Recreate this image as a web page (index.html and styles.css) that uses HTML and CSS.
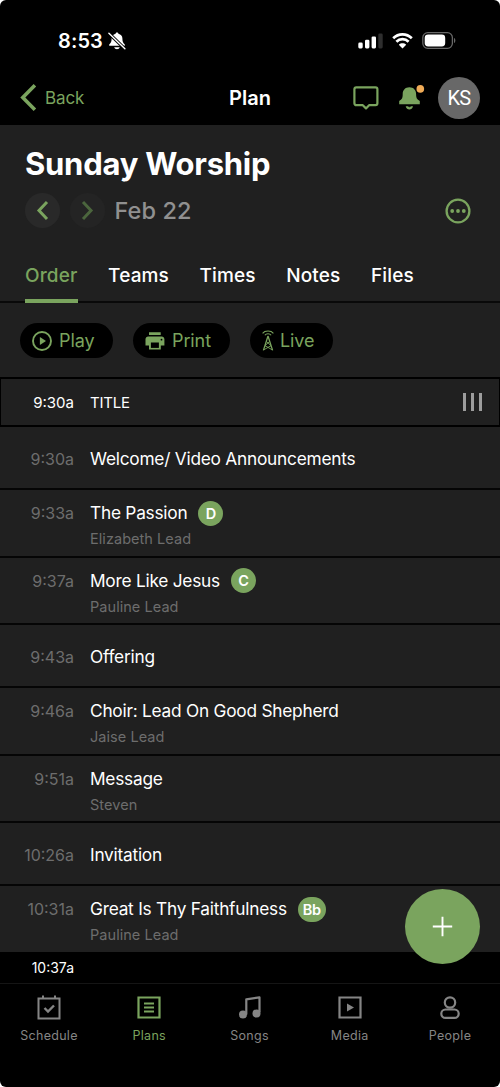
FILE: index.html
```html
<!DOCTYPE html>
<html lang="en">
<head>
<meta charset="utf-8">
<title>Plan</title>
<link rel="stylesheet" href="styles.css">
</head>
<body>
<div class="phone">
  <div class="status">
    <span class="clock">8:53</span>
    <svg class="mute" width="18" height="18" viewBox="0 0 18 18"><path fill="#fff" d="M9 .5c-.8 0-1.400.5-1.400 1.200C5 2.300 3.600 4 3.600 6.500c0 3-.6 4.300-2.400 6v1.200h15.600v-1.200c-1.800-1.700-2.400-3-2.400-6 0-2.500-1.400-4.200-4-4.800C10.400 1 9.800.5 9 .5zM6.200 15.300h5.600c-.3 1.300-1.500 2-2.800 2s-2.500-.7-2.800-2z"/><path stroke="#000" stroke-width="3.200" d="M.8 1.200 17 17"/><path stroke="#fff" stroke-width="1.400" stroke-linecap="round" d="M.9 1.200 16.900 16.800"/></svg>
    <span class="spacer"></span>
    <svg class="signal" width="25" height="16" viewBox="0 0 25 16"><g fill="#fff"><rect x=".3" y="9.600" width="4.400" height="5.800" rx="1.300"/><rect x="7" y="6.800" width="4.400" height="8.600" rx="1.300"/><rect x="13.600" y="3.500" width="4.400" height="11.900" rx="1.300"/></g><rect x="20.300" y=".4" width="4.400" height="15" rx="1.300" fill="#2e2e2e"/></svg>
    <svg class="wifi" width="21" height="16" viewBox="0 0 21 16"><g fill="none" stroke="#fff" stroke-width="2.700"><path d="M1.200 5.300C6.400.1 14.600.1 19.800 5.300"/><path d="M4.400 8.700c3.400-3.400 8.800-3.400 12.200 0"/></g><path fill="#fff" d="M6.800 11.700c2.100-1.900 5.300-1.900 7.400 0L10.500 15.400z"/></svg>
    <svg class="battery" width="34" height="17" viewBox="0 0 34 17"><rect x=".8" y=".7" width="29.600" height="15.600" rx="5" fill="none" stroke="#686868" stroke-width="1.300"/><rect x="2.700" y="2.500" width="20.500" height="12" rx="3.400" fill="#fff"/><path fill="#686868" d="M32 6c1.800.6 1.800 4.400 0 5z"/></svg>
  </div>

  <div class="nav">
    <div class="nav-side">
      <svg width="17" height="27" viewBox="0 0 17 27"><path d="M14.900 1.300 2.800 13.500 14.900 25.700" fill="none" stroke="#7aa45e" stroke-width="3.600"/></svg>
      <span class="back">Back</span>
    </div>
    <h1 class="nav-title">Plan</h1>
    <div class="nav-side nav-actions">
      <svg width="26" height="24" viewBox="0 0 26 24"><path d="M3.300 1.300h19.200c1 0 1.900.8 1.900 1.900v14.100c0 1-.9 1.900-1.900 1.900h-6.400L13 22.400l-3.200-3.200H3.300c-1 0-1.900-.9-1.900-1.900V3.200c0-1.100.9-1.900 1.900-1.900z" fill="none" stroke="#7aa45e" stroke-width="2.200" stroke-linejoin="round"/></svg>
      <svg class="bell" width="27" height="26" viewBox="0 0 27 26"><path fill="#7aa45e" d="M11.400 2.200c-4.200 0-6.700 2.800-6.700 6.800 0 4.200-.6 5.200-3.500 7v3.300h20.600V16c-2.900-1.800-3.700-2.800-3.700-7 0-4-2.500-6.800-6.700-6.800zM7.700 21.300H15c-.5 2.100-1.900 3.200-3.600 3.200s-3.200-1.100-3.700-3.200z"/><path fill="#000" d="M10 21.200h3c-.3.700-.8 1-1.500 1s-1.200-.3-1.500-1z"/><circle cx="22.300" cy="3.900" r="3.800" fill="#f0ab57"/></svg>
      <span class="avatar">KS</span>
    </div>
  </div>

  <div class="plan">
    <h2 class="service">Sunday Worship</h2>
    <div class="dates">
      <span class="round"><svg width="35" height="35" viewBox="0 0 35 35"><path d="M22 9 14 17.500 22 26" fill="none" stroke="#7aa45e" stroke-width="3"/></svg></span>
      <span class="round next"><svg width="35" height="35" viewBox="0 0 35 35"><path d="M13 9 21 17.500 13 26" fill="none" stroke="#4b653d" stroke-width="3"/></svg></span>
      <span class="date">Feb 22</span>
      <svg class="more" width="26" height="26" viewBox="0 0 26 26"><circle cx="13" cy="13" r="11.400" fill="none" stroke="#7aa45e" stroke-width="2.300"/><g fill="#7aa45e"><circle cx="7.200" cy="13" r="1.900"/><circle cx="13" cy="13" r="1.900"/><circle cx="18.800" cy="13" r="1.900"/></g></svg>
    </div>
    <div class="tabs">
      <span class="tab active">Order</span><span class="tab">Teams</span><span class="tab">Times</span><span class="tab">Notes</span><span class="tab">Files</span>
    </div>
    <div class="pills">
      <span class="pill play"><svg width="20" height="20" viewBox="0 0 20 20"><circle cx="10" cy="10" r="9" fill="none" stroke="#7aa45e" stroke-width="1.900"/><path fill="#7aa45e" d="M7.900 6.100v7.800l6.100-3.900z"/></svg>Play</span>
      <span class="pill print"><svg width="20" height="20" viewBox="0 0 20 20"><path fill="#7aa45e" d="M4 1.300h11.700v2.700H4zM3.200 5.400h13.500c1.500 0 2.700 1.200 2.700 2.700v6.400h-3.600v4.100H4v-4.100H.5V8.100c0-1.500 1.200-2.700 2.700-2.700z"/><path fill="#000" d="M5.900 11.500h8v5.400h-8z"/><circle cx="16.500" cy="8.700" r=".9" fill="#000"/></svg>Print</span>
      <span class="pill live"><svg width="12" height="21" viewBox="0 0 12 21"><g fill="none" stroke="#7aa45e" stroke-width="1.100"><path d="M.6 3.300C3 .3 9 .3 11.400 3.300M2.900 5.200c1.400-2 4.800-2 6.200 0"/><path stroke-width="1.300" d="M6 6 1.400 20.400M6 6l4.600 14.400"/><path stroke-width=".9" d="M4.500 11.500 9 15.700l-7 4M7.500 11.500 3 15.700l7 4"/></g></svg>Live</span>
    </div>

    <div class="row header"><span class="time">9:30a</span><span class="name">TITLE</span><span class="grip"><i></i><i></i><i></i></span></div>
    <div class="row"><span class="time">9:30a</span><div class="info"><div class="name">Welcome/ Video Announcements</div></div></div>
    <div class="row tall"><span class="time">9:33a</span><div class="info"><div class="name">The Passion<b class="key">D</b></div><div class="sub">Elizabeth Lead</div></div></div>
    <div class="row tall"><span class="time">9:37a</span><div class="info"><div class="name">More Like Jesus<b class="key">C</b></div><div class="sub">Pauline Lead</div></div></div>
    <div class="row"><span class="time">9:43a</span><div class="info"><div class="name">Offering</div></div></div>
    <div class="row tall"><span class="time">9:46a</span><div class="info"><div class="name">Choir: Lead On Good Shepherd</div><div class="sub">Jaise Lead</div></div></div>
    <div class="row tall"><span class="time">9:51a</span><div class="info"><div class="name">Message</div><div class="sub">Steven</div></div></div>
    <div class="row"><span class="time">10:26a</span><div class="info"><div class="name">Invitation</div></div></div>
    <div class="row tall last"><span class="time">10:31a</span><div class="info"><div class="name">Great Is Thy Faithfulness<b class="key">Bb</b></div><div class="sub">Pauline Lead</div></div></div>
  </div>
  <div class="end"><span class="time">10:37a</span></div>

  <div class="tabbar">
    <div class="item"><svg width="26" height="28" viewBox="0 0 26 28"><g fill="none" stroke="#858585" stroke-width="2"><path d="M2.500 4.500h21v20h-21zM7 1.500v3M19 1.500v3"/><path stroke-width="2.400" d="M8.500 14l3.500 3.500 6-6"/></g></svg><span>Schedule</span></div>
    <div class="item on"><svg width="26" height="28" viewBox="0 0 26 28"><g fill="none" stroke="#7aa45e" stroke-width="2.200"><path d="M2.500 3.500h21v20h-21zM8 9.500h10M8 13.500h10M8 17.500h10"/></g></svg><span>Plans</span></div>
    <div class="item"><svg width="26" height="28" viewBox="0 0 26 28"><path d="M9.300 20.500V5.300l13.200-2v15" fill="none" stroke="#858585" stroke-width="2.200" stroke-linejoin="round"/><circle cx="6" cy="20.500" r="4" fill="#858585"/><circle cx="19.500" cy="19.500" r="4" fill="#858585"/></svg><span>Songs</span></div>
    <div class="item"><svg width="26" height="28" viewBox="0 0 26 28"><path d="M2.500 3.500h21v20h-21z" fill="none" stroke="#858585" stroke-width="2.200"/><path fill="#858585" d="M10 9.500v8l7-4z"/></svg><span>Media</span></div>
    <div class="item"><svg width="26" height="28" viewBox="0 0 26 28"><g fill="none" stroke="#858585" stroke-width="2.200"><circle cx="13" cy="8.500" r="5.200"/><path d="M8.500 15.500h9a4.200 4.200 0 0 1 0 8.400h-9a4.200 4.200 0 0 1 0-8.400z"/></g></svg><span>People</span></div>
  </div>
  <div class="fab"><svg width="21" height="21" viewBox="0 0 21 21"><path d="M10.500.8v19.400M.8 10.500h19.400" stroke="#fff" stroke-width="1.900"/></svg></div>
</div>
</body>
</html>
```

FILE: styles.css
```css
* { box-sizing: border-box; }
html { background: #fff; }
body { margin: 0; font-family: Inter, "Noto Sans", sans-serif; color: #fff; }
svg { display: block; flex: none; }
.phone { position: relative; width: 500px; height: 1087px; background: #000; border-radius: 6px; overflow: hidden; }

.status { display: flex; align-items: center; height: 70px; padding: 11px 44px 0 58px; }
.clock { font-size: 20px; font-weight: 600; letter-spacing: 0.1px; width: 50px; }
.spacer { flex: 1; }
.wifi { margin-left: 9px; }
.battery { margin-left: 9px; }

.nav { display: flex; align-items: center; height: 55px; padding: 0 20px; }
.nav-side { display: flex; align-items: center; flex: 1; }
.back { color: #7aa45e; font-size: 17px; margin-left: 8px; letter-spacing: -0.1px; }
.nav-title { margin: 0; font-size: 20px; font-weight: 600; }
.nav-actions { justify-content: flex-end; }
.bell { margin-left: 19px; }
.avatar { width: 42px; height: 42px; margin-left: 13px; border-radius: 50%; background: #686868; font: 20px/42px Roboto, sans-serif; letter-spacing: -0.6px; text-align: center; }

.plan { background: #202020; height: 827px; padding-top: 19px; }
.service { margin: 0; padding-left: 25px; font-size: 31px; line-height: 40px; font-weight: 700; letter-spacing: -0.25px; }
.dates { display: flex; align-items: center; height: 35px; margin-top: 9px; padding: 0 29.500px 0 25px; }
.round { width: 35px; height: 35px; border-radius: 50%; background: #292929; }
.next { margin-left: 10px; background: #242424; }
.date { flex: 1; margin-left: 9.500px; font-size: 23.500px; font-weight: 500; letter-spacing: 0.1px; color: #909090; }

.tabs { display: flex; gap: 30.500px; height: 75px; padding-left: 25px; border-bottom: 2px solid #090909; }
.tab { height: 75px; padding-top: 34px; font-size: 19px; line-height: 28px; font-weight: 500; letter-spacing: 0.15px; }
.active { color: #7aa45e; border-bottom: 4px solid #7aa45e; }

.pills { display: flex; height: 74px; padding: 20px 0 0 20px; }
.pill { display: flex; align-items: center; height: 35px; padding-left: 12px; border-radius: 18px; background: #000; color: #7aa45e; font-size: 18px; letter-spacing: -0.1px; }
.play { width: 93px; }
.play svg, .print svg { margin-right: 7px; }
.print { width: 97px; margin-left: 20px; }
.live { width: 83px; margin-left: 20px; }
.live svg { margin-right: 6px; }

.row { display: flex; height: 63px; padding-top: 19px; border-bottom: 2px solid #050505; }
.tall { height: 67.500px; padding-top: 10px; }
.time { width: 74px; flex: none; text-align: right; font-size: 16px; line-height: 26px; color: #6d6d6d; }
.info { margin-left: 16px; }
.name { display: flex; align-items: center; font-size: 17.300px; line-height: 26px; letter-spacing: -0.24px; white-space: nowrap; }
.sub { font-size: 14.500px; line-height: 26px; color: #6d6d6d; letter-spacing: 0.05px; }
.key { min-width: 25px; height: 25px; margin-left: 11px; padding: 0 5px; border-radius: 13px; background: #7aa45e; font-size: 14.500px; line-height: 25px; font-weight: 600; text-align: center; }
.header { height: 50px; padding: 11px 17px 0 0; border: 2px solid #000; border-left-width: 1px; border-right-width: 1px; align-items: flex-start; }
.header .time { width: 73px; font-size: 15px; color: #fff; }
.header .name { flex: 1; margin-left: 16px; font-size: 15px; }
.grip { display: flex; gap: 5px; margin-top: 3px; }
.grip i { width: 3px; height: 18px; background: #9d9d9d; }
.last { border-bottom: 0; }

.end { height: 32px; border-bottom: 1px solid #151515; }
.end .time { display: block; color: #fff; font-size: 14px; line-height: 32px; }
.tabbar { display: flex; justify-content: space-between; padding: 10px 1px 0 0; }
.item { width: 98px; display: flex; flex-direction: column; align-items: center; gap: 5px; color: #858585; font-size: 12.500px; line-height: 18px; letter-spacing: 0.3px; }
.on { color: #7aa45e; }
.fab { position: absolute; left: 405px; top: 889px; width: 75px; height: 75px; display: grid; place-items: center; border-radius: 50%; background: #7aa45e; }
```
